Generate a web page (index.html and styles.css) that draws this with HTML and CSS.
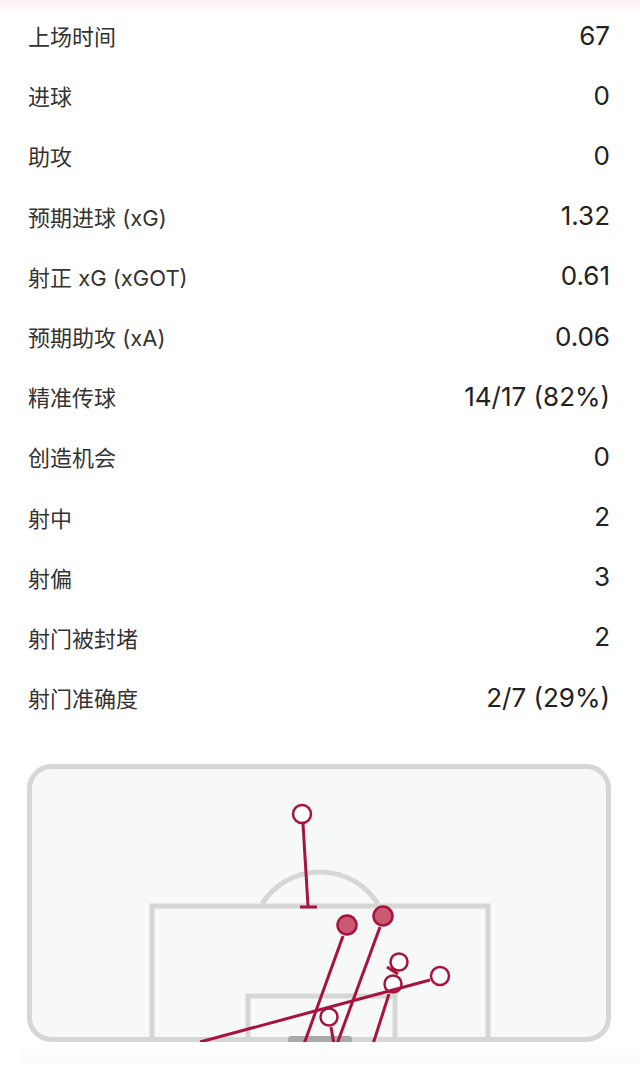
FILE: index.html
```html
<!DOCTYPE html>
<html lang="zh">
<head>
    <meta charset="UTF-8">
    <meta name="viewport" content="width=device-width, initial-scale=1.0">
    <title>球员数据</title>
    <link rel="stylesheet" href="styles.css">
</head>
<body>
<div class="page">
    <div class="stats">
        <div class="row"><span class="label">上场时间</span><span class="value">67</span></div>
        <div class="row"><span class="label">进球</span><span class="value">0</span></div>
        <div class="row"><span class="label">助攻</span><span class="value">0</span></div>
        <div class="row"><span class="label">预期进球 (xG)</span><span class="value">1.32</span></div>
        <div class="row"><span class="label">射正 xG (xGOT)</span><span class="value">0.61</span></div>
        <div class="row"><span class="label">预期助攻 (xA)</span><span class="value">0.06</span></div>
        <div class="row"><span class="label">精准传球</span><span class="value">14/17 (82%)</span></div>
        <div class="row"><span class="label">创造机会</span><span class="value">0</span></div>
        <div class="row"><span class="label">射中</span><span class="value">2</span></div>
        <div class="row"><span class="label">射偏</span><span class="value">3</span></div>
        <div class="row"><span class="label">射门被封堵</span><span class="value">2</span></div>
        <div class="row"><span class="label">射门准确度</span><span class="value">2/7 (29%)</span></div>
    </div>

    <div class="shotmap">
        <svg width="584" height="278" viewBox="27 765 584 278">
            <!-- pitch -->
            <rect x="29.5" y="767.5" width="579" height="273" rx="22" class="pitch"/>
            <path d="M262 905 A68.6 68.6 0 0 1 378 905" class="line"/>
            <path d="M152 1041 V907 H488 V1041" class="line"/>
            <path d="M248 1041 V997 H395 V1041" class="line"/>
            <rect x="288" y="1037" width="64" height="7" rx="3" class="goal"/>

            <!-- shots -->
            <line x1="303" y1="825" x2="308" y2="907" class="shot"/>
            <line x1="300" y1="908" x2="317" y2="908" class="shot"/>
            <circle cx="302" cy="815" r="9" class="miss"/>

            <line x1="343" y1="937" x2="304" y2="1045" class="shot"/>
            <circle cx="347" cy="926" r="9.5" class="on"/>

            <line x1="380" y1="928" x2="337" y2="1045" class="shot"/>
            <circle cx="383" cy="917" r="9.5" class="on"/>

            <line x1="387" y1="968" x2="398" y2="975" class="shot"/>
            <circle cx="399" cy="963" r="8.5" class="miss"/>

            <line x1="389" y1="995" x2="373" y2="1045" class="shot"/>
            <circle cx="393" cy="985" r="8.5" class="miss"/>

            <line x1="430" y1="981" x2="200" y2="1043" class="shot"/>
            <circle cx="440" cy="977" r="9" class="miss"/>

            <line x1="331" y1="1028" x2="334" y2="1045" class="shot"/>
            <circle cx="329" cy="1018" r="8.5" class="miss"/>
        </svg>
    </div>
    <div class="bottom"></div>
</div>
</body>
</html>
```

FILE: styles.css
```css
body {
    margin: 0;
    padding: 0;
    background-color: #fff;
    font-family: Inter, "Noto Sans CJK SC", sans-serif;
    color: #333;
}
.page {
    width: 640px;
    background: linear-gradient(#fcf0f2 0, #ffffff 16px);
}
.stats {
    padding: 5px 30px 0 28px;
}
.row {
    height: 60.2px;
    display: flex;
    align-items: center;
    justify-content: space-between;
}
.label {
    font-size: 22px;
    color: #333;
}
.value {
    font-size: 26px;
    color: #222;
}
.shotmap {
    margin: 37px 0 0 27px;
    width: 584px;
    height: 278px;
}
.shotmap svg {
    display: block;
}
.pitch {
    fill: #f7f8f8;
    stroke: #d6d6d6;
    stroke-width: 5;
}
.line {
    fill: none;
    stroke: #d6d6d6;
    stroke-width: 5;
}
.goal {
    fill: #a9a9a9;
}
.shot {
    stroke: #a8133e;
    stroke-width: 3;
}
.miss {
    fill: #fff;
    stroke: #a8133e;
    stroke-width: 2.5;
}
.on {
    fill: #c95a72;
    stroke: #a8133e;
    stroke-width: 2.5;
}
.bottom {
    height: 22px;
    margin: 0 0 0 20px;
    background: linear-gradient(#fff, #fafafa);
}
```
